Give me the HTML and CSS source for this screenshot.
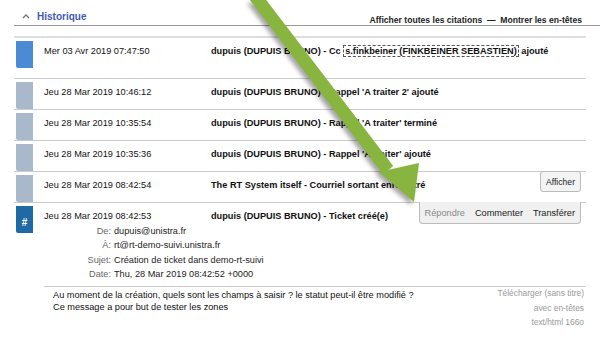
FILE: index.html
```html
<!DOCTYPE html>
<html lang="fr">
<head>
    <meta charset="UTF-8">
    <title>Historique</title>
    <link rel="stylesheet" href="styles.css">
</head>
<body>
    <div class="titlebox">
        <div class="titlebox-title">
            <span class="toggle">
                <svg width="8" height="6" viewBox="0 0 8 6"><path d="M1 5 L4 2 L7 5" fill="none" stroke="#777" stroke-width="1.3"/></svg>
            </span>
            <span class="title-text">Historique</span>
            <span class="title-links">Afficher toutes les citations &nbsp;—&nbsp; Montrer les en-têtes</span>
        </div>

        <div class="history">
            <div class="transaction first">
                <div class="type-block recent"></div>
                <div class="tx-main">
                    <div class="tx-head">
                        <span class="date">Mer 03 Avr 2019 07:47:50</span>
                        <span class="desc">dupuis (DUPUIS BRUNO) - Cc <span class="user-box">s.finkbeiner (FINKBEINER SEBASTIEN)</span> ajouté</span>
                    </div>
                </div>
            </div>
            <div class="transaction">
                <div class="type-block"></div>
                <div class="tx-main">
                    <div class="tx-head">
                        <span class="date">Jeu 28 Mar 2019 10:46:12</span>
                        <span class="desc">dupuis (DUPUIS BRUNO) - Rappel 'A traiter 2' ajouté</span>
                    </div>
                </div>
            </div>
            <div class="transaction">
                <div class="type-block"></div>
                <div class="tx-main">
                    <div class="tx-head">
                        <span class="date">Jeu 28 Mar 2019 10:35:54</span>
                        <span class="desc">dupuis (DUPUIS BRUNO) - Rappel 'A traiter' terminé</span>
                    </div>
                </div>
            </div>
            <div class="transaction">
                <div class="type-block"></div>
                <div class="tx-main">
                    <div class="tx-head">
                        <span class="date">Jeu 28 Mar 2019 10:35:36</span>
                        <span class="desc">dupuis (DUPUIS BRUNO) - Rappel 'A traiter' ajouté</span>
                    </div>
                </div>
            </div>
            <div class="transaction">
                <div class="type-block"></div>
                <div class="tx-main">
                    <div class="tx-head">
                        <span class="date">Jeu 28 Mar 2019 08:42:54</span>
                        <span class="desc">The RT System itself - Courriel sortant enregistré</span>
                        <span class="actions"><button class="show-btn">Afficher</button></span>
                    </div>
                </div>
            </div>
            <div class="transaction open">
                <div class="type-block hash">#</div>
                <div class="tx-main">
                    <div class="tx-head">
                        <span class="date">Jeu 28 Mar 2019 08:42:53</span>
                        <span class="desc">dupuis (DUPUIS BRUNO) - Ticket créé(e)</span>
                        <span class="actions toolbox">
                            <span class="tool disabled">Répondre</span>
                            <span class="tool">Commenter</span>
                            <span class="tool">Transférer</span>
                        </span>
                    </div>
                    <div class="headers">
                        <span class="label">De:</span><span class="value">dupuis@unistra.fr</span>
                        <span class="label">À:</span><span class="value">rt@rt-demo-suivi.unistra.fr</span>
                        <span class="label">Sujet:</span><span class="value">Création de ticket dans demo-rt-suivi</span>
                        <span class="label">Date:</span><span class="value">Thu, 28 Mar 2019 08:42:52 +0000</span>
                    </div>
                    <div class="message">
                        <div class="message-body">
                            Au moment de la création, quels sont les champs à saisir ? le statut peut-il être modifié ?<br>
                            Ce message a pour but de tester les zones
                        </div>
                        <div class="attachments">
                            <span>Télécharger (sans titre)</span>
                            <span>avec en-têtes</span>
                            <span>text/html 166o</span>
                        </div>
                    </div>
                </div>
            </div>
        </div>
    </div>

    <!-- pointer drawn over the screenshot -->
    <svg class="pointer-arrow" width="600" height="339" viewBox="0 0 600 339">
        <polygon points="245.2,-6.1 255.6,-13.9 393.2,166.1 382.8,173.9" fill="#87b540"/>
        <polygon points="379,172 419,163 414,202" fill="#87b540"/>
    </svg>
</body>
</html>
```

FILE: styles.css
```css
body {
    margin: 0;
    font-family: "Liberation Sans", Arial, sans-serif;
    font-size: 9.2px;
    color: #111;
    background: #fff;
}
.titlebox {
    padding-left: 14px;
}
.titlebox-title {
    display: flex;
    align-items: flex-end;
    height: 25px;
    border-bottom: 1px solid #999;
    padding-right: 18px;
}
.toggle {
    width: 23px;
    padding-left: 8px;
    padding-bottom: 6px;
    box-sizing: border-box;
}
.toggle svg {
    display: block;
}
.title-text {
    font-size: 10px;
    font-weight: bold;
    color: #3f5cac;
    line-height: 14px;
    padding-bottom: 1px;
}
.title-links {
    margin-left: auto;
    font-size: 8.6px;
    font-weight: bold;
    color: #222;
    line-height: 10px;
}
.history {
    margin-top: 10px;
    margin-right: 14px;
    border-top: 2px solid #ddd;
}
.transaction {
    display: flex;
    align-items: flex-start;
    min-height: 30px;
    padding-top: 3px;
    box-sizing: border-box;
    border-bottom: 1px solid #ccc;
}
.transaction.first {
    min-height: 41px;
}
.transaction.open {
    border-bottom: none;
}
.type-block {
    width: 17px;
    height: 27px;
    margin-left: 2px;
    background-color: #a9b9cb;
    border-radius: 0 0 0 2px;
    flex-shrink: 0;
}
.type-block.recent {
    background-color: #4b8bd4;
}
.type-block.hash {
    background-color: #1f6aa4;
    color: #fff;
    font-weight: bold;
    font-size: 10px;
    display: flex;
    align-items: flex-end;
    justify-content: center;
    padding-bottom: 5px;
    box-sizing: border-box;
}
.tx-main {
    flex: 1;
    margin-left: 11px;
}
.tx-head {
    display: flex;
    align-items: flex-start;
}
.date {
    width: 167px;
    padding-top: 4px;
    line-height: 12px;
    flex-shrink: 0;
}
.desc {
    padding-top: 4px;
    line-height: 12px;
    font-weight: bold;
}
.user-box {
    border: 1px dashed #555;
    padding: 0 1px;
}
.actions {
    margin-left: auto;
    margin-top: -3px;
}
.show-btn {
    font-family: inherit;
    font-size: 8.6px;
    color: #222;
    background: #f3f3f3;
    border: 1px solid #bbb;
    border-radius: 3px;
    height: 21px;
    padding: 0 5px;
    margin-top: -1px;
    margin-right: 5px;
}
.toolbox {
    display: flex;
    gap: 10px;
    height: 21px;
    align-items: center;
    padding: 0 5px;
    margin-top: -4px;
    margin-right: 5px;
    background: #f0f0f0;
    border: 1px solid #bbb;
    border-top: none;
    border-radius: 0 0 4px 4px;
}
.tool {
    color: #222;
}
.tool.disabled {
    color: #888;
}
.headers {
    display: grid;
    grid-template-columns: 67px 1fr;
    column-gap: 3px;
    line-height: 14.3px;
}
.headers .label {
    text-align: right;
    color: #666;
}
.headers .value {
    color: #222;
}
.message {
    display: flex;
    margin-top: 5px;
    border-top: 1px solid #ccc;
    padding-top: 3px;
}
.message-body {
    flex: 1;
    padding-left: 9px;
    line-height: 11.4px;
}
.attachments {
    display: flex;
    flex-direction: column;
    align-items: flex-end;
    color: #999;
    font-size: 8.4px;
    line-height: 14.5px;
    padding-right: 2px;
    margin-top: -4px;
}
.pointer-arrow {
    position: absolute;
    top: 0;
    left: 0;
    pointer-events: none;
    filter: drop-shadow(-3px 3px 2px rgba(0, 0, 0, 0.35));
}
```
